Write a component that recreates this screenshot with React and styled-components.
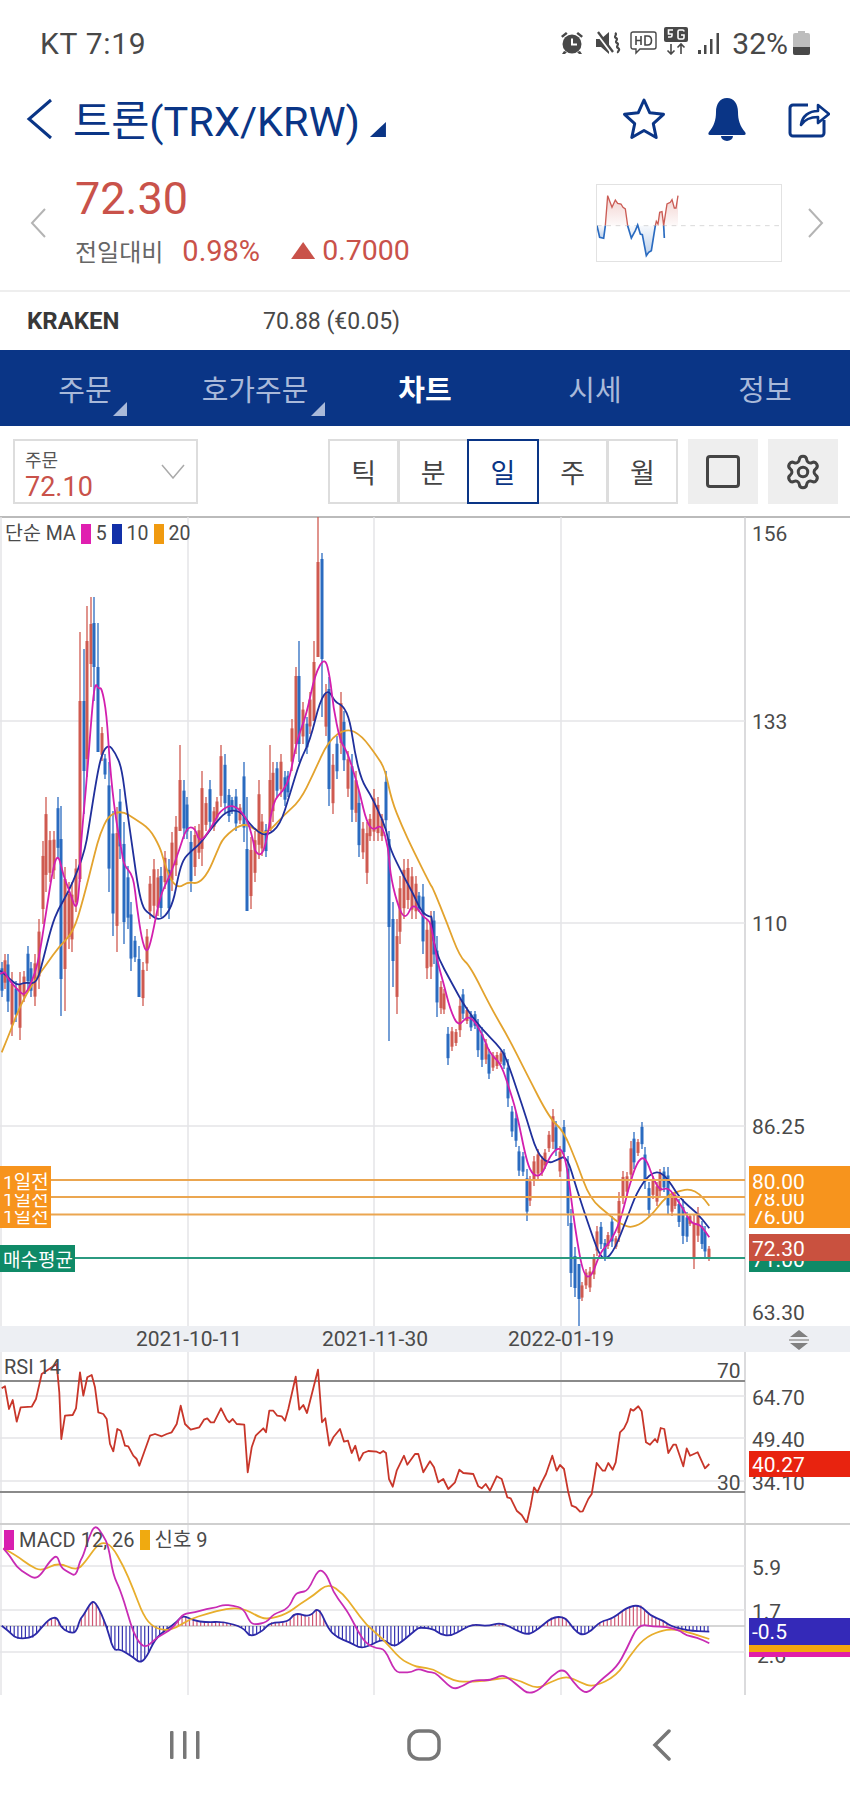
import React from 'react';
import styled, { createGlobalStyle } from 'styled-components';
import { Settings } from 'lucide-react';

const NAVY = '#0a3586';
const RED = '#c9524a';
const FONT = 'Roboto, "Noto Sans CJK KR", sans-serif';

const GlobalStyle = createGlobalStyle`
    html, body {
        margin: 0;
        padding: 0;
        background: #fff;
    }
    body {
        font-family: ${FONT};
        color: #444;
    }
`;

// candles: x, high, low, red?, optional body top/bottom
const candles = [
    [2,963,998,0],[5,955,990,1],[8,955,1013,0],[12,973,1037,1],[16,982,1023,0],[20,973,1041,1],[24,972,1003,1],[28,947,990,0],
    [31,963,998,0],[35,955,1007,1],[39,920,990,1],[43,842,925,1],[46,798,893,1],[50,832,883,1],[54,832,880,1],[58,798,860,0],
    [61,807,1017,0,840,980],[65,868,1012,1,880,970],[69,883,950,1],[72,883,953,1],[76,860,913,1],[80,633,883,1,702,880],[84,650,815,0,702,772],[87,607,778,1,642,760],
    [91,598,688,1,625,665],[94,598,702,0,624,668],[98,624,753,0,668,753],[102,728,762,1],[105,755,780,0],[109,763,893,0],[113,812,937,0],[117,808,953,1],
    [120,790,860,0],[124,823,945,0],[128,867,930,0],[131,903,972,0],[135,937,963,0],[139,947,998,0,960,998],[143,963,1007,1],[147,930,972,1],
    [150,877,920,1],[154,860,917,1],[158,870,917,1],[161,868,918,0],[165,852,890,1],[169,860,920,0],[172,833,892,1],[176,817,877,1],
    [180,746,832,1,781,832],[184,781,840,0],[187,798,840,0],[191,832,893,0],[195,827,877,1],[199,825,860,1],[202,772,867,1],[206,798,832,1],
    [210,781,832,0],[214,808,832,1],[217,798,823,1],[221,746,808,1],[225,755,815,0],[229,790,823,0],[232,798,815,0],[236,790,832,0],
    [240,805,825,1],[244,763,843,0],[247,798,912,0,850,912],[251,838,910,1],[255,832,883,1],[259,781,860,1],[262,815,857,1],[266,825,858,0],
    [270,746,832,1,781,832],[273,763,823,1],[277,763,798,0],[281,755,798,1],[285,772,807,0],[288,772,798,0],[292,720,772,1],[296,668,755,1,677,745],
    [299,642,763,0,677,745],[303,703,745,1],[307,718,755,0],[310,693,735,1],[314,642,722,1,663,722],[318,518,658,1,563,658],[322,554,718,0,560,660],[326,685,737,1],
    [329,678,807,0,690,790],[333,755,815,1],[337,737,780,0],[341,693,755,1],[344,712,772,0],[348,752,798,1],[352,755,823,0],[356,772,823,1],
    [359,792,858,0],[363,823,860,1],[367,823,885,1],[370,815,842,1],[374,790,842,1],[378,798,842,1],[382,815,842,1],[386,772,832,0],
    [389,832,1042,0,840,928],[393,903,988,0,920,962],[397,920,1015,1],[400,877,945,1],[404,860,920,1],[408,860,910,1],[412,868,920,1],[416,877,920,1],
    [419,893,913,0],[423,885,955,0],[427,920,980,1],[431,912,980,1],[434,912,965,0],[437,937,1018,0],[441,982,1015,1],[444,990,1015,1],
    [448,1028,1066,0],[452,1028,1052,1],[456,1030,1047,1],[460,1000,1038,1],[463,990,1020,0],[467,1008,1025,1],[471,1012,1032,0],[475,1012,1030,0],
    [478,1020,1058,0],[482,1028,1068,0],[486,1040,1065,1],[489,1050,1080,0],[493,1053,1072,1],[497,1053,1070,1],[501,1052,1065,1],[504,1050,1070,0],
    [508,1060,1108,0],[512,1107,1138,0],[516,1113,1148,0],[519,1147,1177,0],[523,1153,1177,0],[527,1170,1222,0],[530,1177,1207,1],[534,1157,1187,1],
    [538,1150,1180,1],[542,1157,1177,1],[545,1150,1170,1],[549,1132,1153,1],[553,1110,1150,1],[556,1122,1157,0],[560,1147,1178,1],[564,1121,1160,0],
    [568,1157,1227,0],[571,1210,1288,0],[575,1248,1298,0],[579,1265,1327,0,1265,1300],[582,1283,1302,1],[586,1270,1290,1],[590,1268,1293,1],[594,1255,1280,1],
    [597,1227,1257,1],[601,1223,1250,0],[605,1240,1262,0],[608,1233,1250,1],[612,1217,1248,0],[616,1237,1250,1],[619,1193,1243,1],[623,1172,1205,1],
    [627,1173,1197,1],[631,1142,1183,1],[634,1133,1170,0],[638,1140,1157,1],[642,1123,1150,0],[645,1148,1190,0],[649,1183,1217,0],[653,1177,1200,1],
    [657,1183,1207,1],[660,1170,1197,1],[664,1168,1193,0],[668,1168,1215,0],[672,1193,1217,1],[675,1193,1210,1],[679,1200,1228,0],[683,1200,1245,0],
    [687,1213,1243,0],[690,1215,1227,1],[694,1215,1270,1],[698,1208,1243,1],[702,1222,1250,0],[705,1227,1258,0],[709,1247,1262,1],
];

const z = (ox, oy, list) => {
    const out = [];
    for (let i = 0; i < list.length; i += 2) out.push([ox + list[i] / 3, oy + list[i + 1] / 3]);
    return out;
};
const toPath = (pts) => 'M' + pts.map((p) => `${p[0].toFixed(1)} ${p[1].toFixed(1)}`).join('L');

// rounds the traced corners off, the averages are smooth lines in the chart
const smooth = (pts) => {
    let d = `M${pts[0][0].toFixed(1)} ${pts[0][1].toFixed(1)}`;
    for (let i = 1; i < pts.length - 1; i++) {
        const mx = (pts[i][0] + pts[i + 1][0]) / 2;
        const my = (pts[i][1] + pts[i + 1][1]) / 2;
        d += `Q${pts[i][0].toFixed(1)} ${pts[i][1].toFixed(1)} ${mx.toFixed(1)} ${my.toFixed(1)}`;
    }
    const last = pts[pts.length - 1];
    return d + `L${last[0].toFixed(1)} ${last[1].toFixed(1)}`;
};

const ma5 = [
    ...z(0, 850, [0,375,15,365,20,385,60,430,75,438,95,400,115,340,135,210,160,50,175,15,190,80,210,130,230,190,240,90]),
    ...z(0, 515, [240,1020,260,800,275,600,285,505,295,525,305,520,320,600,330,760,345,900,365,1010]),
    ...z(0, 850, [372,50,400,80,410,170,425,270,440,315,455,270,480,140,510,80,535,10]),
    ...z(0, 515, [540,1000,560,940,585,940,600,990,640,930,660,890,700,870,740,910,760,980]),
    ...z(0, 850, [765,10,785,20]),
    ...z(0, 515, [800,980,820,860,850,830,870,790,890,680,920,600,945,480,975,428,990,490,1000,580,1020,680,1040,710,1060,770,1080,840,1100,925,1120,950,1145,930,1165,1000]),
    ...z(0, 850, [1170,70,1190,160,1215,215,1240,160,1270,205,1290,215,1300,265]),
    ...z(420, 950, [50,30,70,100,90,180,115,235,145,195,180,240,210,315,240,340,262,400,290,490,320,640,340,680,365,680,390,620,420,590,440,640,465,840,490,980,515,985,540,910,570,880,600,820,625,720,650,640,675,620,700,690,720,725,745,715,770,750,790,780,815,825,840,825,868,865]),
];

const ma10 = [
    ...z(0, 850, [0,365,20,380,50,410,75,400,110,405,130,330,155,230,175,180,205,130,235,60,255,0]),
    ...z(0, 515, [265,950,290,790,305,720,325,690,345,715,365,760,380,880,400,1020]),
    ...z(0, 850, [415,120,430,180,450,195,470,212,495,205,520,160,535,80,550,30,575,5]),
    ...z(0, 515, [600,990,640,935,680,890,720,890,745,925,775,955,800,965,840,935,870,840,900,740,930,680,960,560,985,525,1005,565,1030,575,1050,620,1065,720,1085,800,1110,840,1135,890,1160,950]),
    ...z(0, 850, [1170,0,1210,80,1240,135,1265,190,1290,205,1296,200]),
    ...z(420, 950, [40,0,105,120,130,165,180,235,245,300,265,345,290,420,320,510,350,610,385,645,415,630,440,620,470,720,510,840,535,910,555,935,585,900,620,810,650,730,690,672,730,668,780,750,830,790,868,838]),
];

const ma20 = [
    ...z(0, 850, [5,610,30,550,60,470,100,400,140,345,175,295,220,250,250,150,285,10]),
    ...z(0, 515, [300,960,325,905,365,890,405,915,450,945,480,1000]),
    ...z(0, 850, [490,30,510,90,535,118,565,98,595,105,625,70,650,10]),
    ...z(0, 515, [670,970,730,925,770,950,800,960,850,905,900,860,940,780,985,680,1040,642,1085,665,1130,725,1155,765,1175,860,1205,935,1240,1010]),
    ...z(0, 850, [1290,105]),
    ...z(420, 730, [40,480,80,580,120,685]),
    ...z(420, 950, [150,50,215,180,265,265,320,375,390,510,430,545,470,640,510,750,570,800,600,825,640,838,690,805,740,740,780,725,810,720,840,735,868,770]),
];

const rsi = [
    ...z(0, 1330, [5,178,15,172,27,240,38,213,50,278,62,235,95,233,108,210,125,135,170,105,178,190,184,330,195,260,218,258,228,238,240,130,250,200,262,145,275,138,285,175,295,250,310,255,320,270,330,345,340,367,352,300,362,305,375,350,385,352,400,380,410,390,418,410,450,320,465,315,485,322,500,315,515,310,530,285,542,230,555,285,572,302,598,295,612,272,622,268,632,280,642,280,663,238,680,272,688,280,698,270,710,285,733,287,743,430,755,355,767,320,790,298,798,310,808,245,820,245,832,260,845,262,855,275,865,240,887,143,898,242,910,228,921,252,954,122,966,280,976,268,988,350,1000,325,1020,300,1032,338,1044,335,1055,372,1066,350,1078,395,1090,372,1105,366,1130,368,1140,373,1150,366,1158,372,1167,450,1178,473,1190,425,1212,380,1222,407,1245,375,1255,375]),
    ...z(420, 1330, [10,430,30,397,42,415,55,460,70,450,85,480,105,460,118,422,130,432,160,435,175,472,185,478,197,465,210,485,230,442,245,450,262,505,272,508,290,545,305,558,320,582,332,530,342,475,352,490,365,460,378,435,397,380,410,425,420,408,432,420,445,490,455,530,468,535,480,548,488,547,505,510,515,495,530,402,548,425,555,425,565,402,578,422,587,400,600,310,612,298,622,278,632,240,640,245,655,232,665,247,678,340,690,347,705,330,712,340,722,297,733,300,745,372,760,347,768,347,790,412,800,358,810,380,833,370,855,418,868,405]),
];

const macd = [
    ...z(0, 1330, [10,658,30,680,50,715,80,735,105,750,125,735,150,695,172,677,182,715,205,730,228,742,240,695,250,680,265,630,285,585,310,620,325,650,340,740,360,780,385,860,400,910,420,945,440,955,470,925,510,905,535,875,550,855,585,850,620,840,650,835,670,827,700,830,730,838,750,880,765,887,800,880,820,855,865,840,885,795,900,790,925,785,955,718,980,735,1000,790,1030,830,1050,860,1075,910,1100,945,1130,958,1155,960,1185,1030,1210,1030,1235,1030,1255,1018]),
    ...z(420, 1330, [25,1030,45,1030,65,1050,100,1082,130,1070,160,1052,210,1055,245,1037,270,1050,300,1075,325,1095,360,1082,395,1040,432,1017,460,1060,490,1090,510,1088,540,1055,590,1015,620,960,655,885,700,893,740,893,780,905,800,920,830,925,868,943]),
];

const signal = [
    ...z(0, 1330, [10,658,50,680,90,710,125,727,175,700,230,725,255,700,290,650,310,640,335,650,370,710,400,780,430,860,460,895,500,905,530,895,570,870,620,855,680,838,730,838,770,860,800,872,860,855,900,825,940,800,985,762,1030,795,1060,835,1100,890,1150,930,1200,990,1240,1010]),
    ...z(420, 1330, [0,1015,40,1020,80,1045,120,1060,200,1055,260,1045,300,1055,350,1080,390,1060,440,1040,480,1060,520,1075,590,1040,630,980,670,930,720,905,760,900,800,908,868,930]),
];

const histLine = [
    ...z(0, 1330, [5,890,25,905,50,930,100,925,125,895,150,868,172,865,182,895,205,910,228,912,240,870,250,860,275,815,290,825,320,890,340,965,360,960,400,985,420,1002,440,985,465,930,500,900,530,880,548,858,580,875,620,880,670,878,730,895,750,925,790,905,810,880,865,880,885,850,930,865,955,832,985,900,1010,925,1050,940,1080,958,1110,950,1150,928,1180,955,1210,935,1250,900]),
    ...z(420, 1330, [0,895,40,900,60,915,90,922,130,900,160,885,200,892,245,880,290,905,325,918,355,900,395,865,435,863,460,900,485,920,515,905,540,878,580,868,620,835,660,827,690,860,730,875,750,890,800,905,868,908]),
];

const histAt = (x) => {
    for (let i = 1; i < histLine.length; i++) {
        const a = histLine[i - 1];
        const b = histLine[i];
        if (x <= b[0]) return a[1] + ((x - a[0]) / (b[0] - a[0])) * (b[1] - a[1]);
    }
    return 1627;
};

const histBars = [];
for (let x = 3; x < 710; x += 3.73) histBars.push([x, histAt(x)]);

const VGrid = ({ y1, y2 }) => (
    <>
        <GridLine x1="1" x2="1" y1={y1} y2={y2} />
        <GridLine x1="188" x2="188" y1={y1} y2={y2} />
        <GridLine x1="374" x2="374" y1={y1} y2={y2} />
        <GridLine x1="561" x2="561" y1={y1} y2={y2} />
        <AxisBorder x1="745" x2="745" y1={y1} y2={y2} />
    </>
);

const HGrid = ({ y }) => <GridLine x1="0" x2="745" y1={y} y2={y} />;

const PriceTag = ({ y, h = 28, x = 749, w = 101, color, text, textY }) => (
    <>
        <rect x={x} y={y} width={w} height={h} fill={color} />
        <TagText x={x + 3} y={textY} $small={x === 0}>{text}</TagText>
    </>
);

const MainChart = () => (
    <Plot width="850" height="809" viewBox="0 518 850 809">
        <VGrid y1={518} y2={1327} />
        <HGrid y={722} />
        <HGrid y={924} />
        <HGrid y={1127} />
        {candles.map(([x, hi, lo, up, bt, bb], i) => {
            const h = lo - hi;
            const top = bt ?? hi + h * 0.18;
            const bot = bb ?? lo - h * 0.18;
            const col = up ? '#cf5a50' : '#2a6bc0';
            return (
                <g key={i}>
                    <line x1={x} x2={x} y1={hi} y2={lo} stroke={col} strokeWidth="1.3" />
                    <rect x={x - 1.5} y={top} width="3" height={bot - top} fill={col} />
                </g>
            );
        })}
        <Curve d={smooth(ma20)} stroke="#e3a32e" />
        <Curve d={smooth(ma10)} stroke="#20309c" />
        <Curve d={smooth(ma5)} stroke="#d31fae" />
        <LevelLine x1="51" x2="745" y1="1181" y2="1181" stroke="#eba650" />
        <LevelLine x1="51" x2="745" y1="1198" y2="1198" stroke="#eba650" />
        <LevelLine x1="51" x2="745" y1="1215.5" y2="1215.5" stroke="#eba650" />
        <LevelLine x1="75" x2="745" y1="1259" y2="1259" stroke="#2b9a80" />

        <PriceTag x={0} w={51} y={1201} color="#f7941d" text="1일전" textY={1215.5} />
        <PriceTag x={0} w={51} y={1184} color="#f7941d" text="1일전" textY={1198} />
        <PriceTag x={0} w={51} y={1167} color="#f7941d" text="1일전" textY={1181} />
        <PriceTag x={0} w={75} y={1246} h={27} color="#0f8a67" text="매수평균" textY={1259.5} />

        <AxisText x="752" y="533">156</AxisText>
        <AxisText x="752" y="721">133</AxisText>
        <AxisText x="752" y="923">110</AxisText>
        <AxisText x="752" y="1126">86.25</AxisText>
        <AxisText x="752" y="1312">63.30</AxisText>

        <PriceTag y={1201} color="#f7941d" text="76.00" textY={1215.5} />
        <PriceTag y={1184} color="#f7941d" text="78.00" textY={1198} />
        <PriceTag y={1167} color="#f7941d" text="80.00" textY={1181} />
        <PriceTag y={1246} h={27} color="#0f8a67" text="71.00" textY={1259} />
        <PriceTag y={1235} h={27} color="#c9513f" text="72.30" textY={1248} />
    </Plot>
);

const RsiChart = () => (
    <Plot width="850" height="171" viewBox="0 1353 850 171">
        <VGrid y1={1353} y2={1524} />
        <HGrid y={1397} />
        <HGrid y={1439} />
        <HGrid y={1482} />
        <BandLine x1="0" x2="745" y1="1382" y2="1382" />
        <BandLine x1="0" x2="745" y1="1493" y2="1493" />
        <Curve d={toPath(rsi)} stroke="#c8362a" />
        <AxisText x="717" y="1370">70</AxisText>
        <AxisText x="717" y="1482">30</AxisText>
        <AxisText x="752" y="1397">64.70</AxisText>
        <AxisText x="752" y="1439">49.40</AxisText>
        <AxisText x="752" y="1482">34.10</AxisText>
        <PriceTag y={1452} h={26} color="#e8230f" text="40.27" textY={1464} />
    </Plot>
);

const MacdChart = () => (
    <Plot width="850" height="172" viewBox="0 1524 850 172">
        <VGrid y1={1524} y2={1696} />
        <HGrid y={1567} />
        <HGrid y={1611} />
        <HGrid y={1653} />
        <line x1="0" x2="745" y1="1627" y2="1627" stroke="#c9c9c9" strokeWidth="1.5" />
        {histBars.map(([x, y], i) => (
            <line key={i} x1={x} x2={x} y1="1627" y2={y} stroke={y < 1627 ? '#cf5673' : '#3432b0'} strokeWidth="1.2" />
        ))}
        <Curve d={smooth(histLine)} stroke="#2c2aa8" />
        <Curve d={smooth(signal)} stroke="#e8ae2c" />
        <Curve d={smooth(macd)} stroke="#c82cb4" />
        <AxisText x="752" y="1567">5.9</AxisText>
        <AxisText x="752" y="1611">1.7</AxisText>
        <AxisText x="757" y="1655">2.6</AxisText>
        <rect x="749" y="1646" width="101" height="7" fill="#f2a60e" />
        <rect x="749" y="1653" width="101" height="5" fill="#e01fa8" />
        <PriceTag y={1619} h={27} color="#3429b8" text="-0.5" textY={1631} />
    </Plot>
);

const red = ['75,170 82,80 95,115 105,93 112,103 122,105 128,115 135,120 142,170', '225,170 228,157 233,165 238,130 245,128 250,170', '250,170 260,105 270,100 275,92 282,117 287,117 293,80 293,170'];
const blue = ['50,170 58,205 70,208 75,170', '142,170 153,207 165,185 172,168 180,195 186,197 198,260 205,250 213,245 225,170', '250,170 252,207 250,170'];

const MiniChart = () => (
    <MiniBox>
        <svg width="184" height="76" viewBox="50 48 552 228">
            <defs>
                <linearGradient id="miniRed" x1="0" y1="0" x2="0" y2="1">
                    <stop offset="0" stopColor="#cf5a50" stopOpacity="0.28" />
                    <stop offset="1" stopColor="#cf5a50" stopOpacity="0.03" />
                </linearGradient>
                <linearGradient id="miniBlue" x1="0" y1="1" x2="0" y2="0">
                    <stop offset="0" stopColor="#2a6bc0" stopOpacity="0.32" />
                    <stop offset="1" stopColor="#2a6bc0" stopOpacity="0.03" />
                </linearGradient>
            </defs>
            <line x1="50" x2="602" y1="170" y2="170" stroke="#d9d9d9" strokeWidth="3" strokeDasharray="14 14" />
            {red.map((p) => <polygon key={p} points={p} fill="url(#miniRed)" />)}
            {blue.map((p) => <polygon key={p} points={p} fill="url(#miniBlue)" />)}
            <polyline points="75,170 82,80 95,115 105,93 112,103 122,105 128,115 135,120 142,170" fill="none" stroke="#cb5c55" strokeWidth="4" />
            <polyline points="225,170 228,157 233,165 238,130 245,128 250,170 260,105 270,100 275,92 282,117 287,117 293,80" fill="none" stroke="#cb5c55" strokeWidth="4" />
            <polyline points="50,170 58,205 70,208 75,170" fill="none" stroke="#2a6bc0" strokeWidth="5" />
            <polyline points="142,170 153,207 165,185 172,168 180,195 186,197 198,260 205,250 213,245 225,170" fill="none" stroke="#2a6bc0" strokeWidth="5" />
            <polyline points="250,170 252,207" fill="none" stroke="#2a6bc0" strokeWidth="5" />
        </svg>
    </MiniBox>
);

const App = () => {
    return (
        <>
            <GlobalStyle />
            <Page>
                <StatusBar>
                    <StatusText>KT 7:19</StatusText>
                    <StatusIcons>
                        <svg width="24" height="24" viewBox="0 0 24 24" fill="#484848">
                            <path d="M1 5l5-4 1.6 1.8-5 4zM23 5l-5-4-1.6 1.8 5 4z" />
                            <circle cx="12" cy="13" r="9.5" />
                            <path d="M4 20l-2 3h3l2-2zM20 20l2 3h-3l-2-2z" />
                            <path d="M12 7.5V13.5H17" fill="none" stroke="#fff" strokeWidth="2" />
                        </svg>
                        <svg width="26" height="24" viewBox="0 0 26 24" style={{ marginLeft: 11 }}>
                            <path d="M1 8h5l8-7v22l-8-7H1z" fill="#484848" />
                            <path d="M2 2l15 20" stroke="#fff" strokeWidth="3" />
                            <path d="M3 1l15 20" stroke="#484848" strokeWidth="2.4" />
                            <path d="M20 2c3 2-2 3 1 5s-2 3 1 5-2 3 1 5-1 3 0 5" fill="none" stroke="#484848" strokeWidth="2.2" />
                        </svg>
                        <svg width="27" height="24" viewBox="0 0 27 24" style={{ marginLeft: 9 }}>
                            <path d="M3 1h21a2 2 0 0 1 2 2v13a2 2 0 0 1-2 2H10l-4 4v-4H3a2 2 0 0 1-2-2V3a2 2 0 0 1 2-2z" fill="none" stroke="#484848" strokeWidth="1.4" />
                            <path d="M6 5v9M6 9.500h5M11 5v9M15 5v9h2.500c2.500 0 4-1.500 4-4.500s-1.500-4.500-4-4.500z" fill="none" stroke="#484848" strokeWidth="1.6" />
                        </svg>
                        <svg width="24" height="28" viewBox="0 0 24 28" style={{ marginLeft: 7, marginTop: -5 }}>
                            <rect x="0" y="0" width="24" height="15" rx="2" fill="#484848" />
                            <path d="M9 3H4.500v4H8v1.500a1.500 1.500 0 0 1-1.500 1.500H4M20 4.500a1.500 1.500 0 0 0-1.500-1.500h-3a1.500 1.500 0 0 0-1.500 1.500v6a1.500 1.500 0 0 0 1.500 1.500h3a1.500 1.500 0 0 0 1.500-1.500V8h-3" fill="none" stroke="#fff" strokeWidth="1.6" />
                            <path d="M7 17v10M3.500 23.500L7 27l3.500-3.500M17 27V17M13.500 20.500L17 17l3.500 3.500" fill="none" stroke="#484848" strokeWidth="1.6" />
                        </svg>
                        <svg width="23" height="23" viewBox="0 0 23 23" fill="#484848" style={{ marginLeft: 9 }}>
                            <rect x="1" y="18" width="3" height="4" />
                            <rect x="7" y="13" width="2.500" height="9" />
                            <rect x="13" y="7" width="2.500" height="15" />
                            <rect x="19.500" y="1" width="2.500" height="21" />
                        </svg>
                        <BatteryText>32%</BatteryText>
                        <svg width="17" height="24" viewBox="0 0 17 24">
                            <path d="M5 0h7v2h3a2 2 0 0 1 2 2v18a2 2 0 0 1-2 2H2a2 2 0 0 1-2-2V4a2 2 0 0 1 2-2h3z" fill="#bdbdbd" />
                            <path d="M0 16h17v6a2 2 0 0 1-2 2H2a2 2 0 0 1-2-2z" fill="#484848" />
                        </svg>
                    </StatusIcons>
                </StatusBar>

                <Header>
                    <svg width="27" height="42" viewBox="0 0 27 42">
                        <path d="M25 2L3 21l22 19" fill="none" stroke={NAVY} strokeWidth="3" />
                    </svg>
                    <Title>트론(TRX/KRW)</Title>
                    <TitleMark />
                    <HeaderIcons>
                        <svg width="44" height="44" viewBox="0 0 44 44">
                            <path d="M22 3l5.800 12.800 13.700 1.500-10.200 9.400 2.900 13.800L22 33.500 9.800 40.500l2.900-13.800L2.500 17.300l13.700-1.500z" fill="none" stroke={NAVY} strokeWidth="3" strokeLinejoin="round" />
                        </svg>
                        <svg width="40" height="44" viewBox="0 0 40 44">
                            <path d="M20 1c7 0 11 6 11 14 0 8 2 14 7 20 1 1 1 3-1 3H3c-2 0-2-2-1-3 5-6 7-12 7-20C9 7 13 1 20 1z" fill={NAVY} />
                            <path d="M14 39h12a6 5 0 0 1-12 0z" fill={NAVY} />
                        </svg>
                        <svg width="42" height="40" viewBox="0 0 42 40">
                            <path d="M20 6H5a3 3 0 0 0-3 3v25a3 3 0 0 0 3 3h28a3 3 0 0 0 3-3V21" fill="none" stroke={NAVY} strokeWidth="3" />
                            <path d="M13 26c1-9 8-14 17-14V6l11 9-11 9v-6c-8 0-13 2-17 8z" fill="none" stroke={NAVY} strokeWidth="2.600" strokeLinejoin="round" />
                        </svg>
                    </HeaderIcons>
                </Header>

                <Quote>
                    <svg width="16" height="30" viewBox="0 0 16 30">
                        <path d="M15 1L2 15l13 14" fill="none" stroke="#b4b4b4" strokeWidth="2" />
                    </svg>
                    <QuoteBody>
                        <Price>72.30</Price>
                        <ChangeRow>
                            <ChangeLabel>전일대비</ChangeLabel>
                            <ChangeRate>0.98%</ChangeRate>
                            <UpMark />
                            <ChangeValue>0.7000</ChangeValue>
                        </ChangeRow>
                    </QuoteBody>
                    <MiniChart />
                    <svg width="16" height="30" viewBox="0 0 16 30">
                        <path d="M1 1l13 14L1 29" fill="none" stroke="#b4b4b4" strokeWidth="2" />
                    </svg>
                </Quote>

                <Exchange>
                    <ExchangeName>KRAKEN</ExchangeName>
                    <ExchangePrice>70.88 (€0.05)</ExchangePrice>
                </Exchange>

                <Tabs>
                    <Tab $markRight={43}>주문</Tab>
                    <Tab $markRight={15}>호가주문</Tab>
                    <Tab $active>차트</Tab>
                    <Tab>시세</Tab>
                    <Tab>정보</Tab>
                </Tabs>

                <Toolbar>
                    <PriceSelect>
                        <SelectText>
                            <SelectLabel>주문</SelectLabel>
                            <SelectValue>72.10</SelectValue>
                        </SelectText>
                        <svg width="24" height="15" viewBox="0 0 24 15">
                            <path d="M1 1l11 13L23 1" fill="none" stroke="#aaa" strokeWidth="1.500" />
                        </svg>
                    </PriceSelect>
                    <Periods>
                        <Period>틱</Period>
                        <Period>분</Period>
                        <Period $selected>일</Period>
                        <Period>주</Period>
                        <Period>월</Period>
                    </Periods>
                    <ToolButton><SquareIcon /></ToolButton>
                    <ToolButton><Settings size={38} color="#444" strokeWidth={1.9} /></ToolButton>
                </Toolbar>

                <PricePane>
                    <MainChart />
                    <Legend $top={5} $left={5}>
                        <LegendText>단순 MA</LegendText>
                        <Swatch $color="#e01fb0" />
                        <LegendText>5</LegendText>
                        <Swatch $color="#1230a8" />
                        <LegendText>10</LegendText>
                        <Swatch $color="#f09a10" />
                        <LegendText>20</LegendText>
                    </Legend>
                </PricePane>

                <DateBar>
                    <DateText>2021-10-11</DateText>
                    <DateText>2021-11-30</DateText>
                    <DateText>2022-01-19</DateText>
                    <SortIcon width="22" height="20" viewBox="0 0 22 20">
                        <path d="M11 0l9 7H2zM11 20l-9-7h18z" fill="#808080" />
                        <rect x="1" y="9" width="20" height="2" fill="#b0b0b0" />
                    </SortIcon>
                </DateBar>

                <IndicatorPane>
                    <RsiChart />
                    <Legend $top={4} $left={4}>
                        <LegendText $wide>RSI 14</LegendText>
                    </Legend>
                </IndicatorPane>

                <IndicatorPane $divider>
                    <MacdChart />
                    <Legend $top={6} $left={4}>
                        <Swatch $color="#d81fb0" />
                        <LegendText $wide>MACD 12, 26</LegendText>
                        <Swatch $color="#f0aa10" />
                        <LegendText $wide>신호 9</LegendText>
                    </Legend>
                </IndicatorPane>

                <NavBar>
                    <svg width="32" height="30" viewBox="0 0 32 30" fill="#777">
                        <rect x="1" y="1" width="3.500" height="28" rx="1" />
                        <rect x="14" y="1" width="3.500" height="28" rx="1" />
                        <rect x="27" y="1" width="3.500" height="28" rx="1" />
                    </svg>
                    <svg width="34" height="32" viewBox="0 0 34 32">
                        <rect x="2" y="2" width="30" height="28" rx="10" fill="none" stroke="#777" strokeWidth="3.500" />
                    </svg>
                    <svg width="20" height="32" viewBox="0 0 20 32">
                        <path d="M17 2L3 16l14 14" fill="none" stroke="#777" strokeWidth="3.500" strokeLinecap="round" />
                    </svg>
                </NavBar>
            </Page>
        </>
    );
};

const Page = styled.div`
    width: 850px;
    height: 1795px;
    overflow: hidden;
    background: #fff;
    display: flex;
    flex-direction: column;
`;

const StatusBar = styled.div`
    height: 86px;
    flex-shrink: 0;
    display: flex;
    align-items: center;
    justify-content: space-between;
    padding: 0 40px;
`;
const StatusText = styled.span`
    font-size: 30px;
    letter-spacing: 0.7px;
    color: #484848;
`;
const StatusIcons = styled.div`
    display: flex;
    align-items: center;
`;
const BatteryText = styled.span`
    font-size: 30px;
    color: #484848;
    margin: 0 5px 0 12px;
`;

const Header = styled.div`
    height: 70px;
    flex-shrink: 0;
    box-sizing: border-box;
    display: flex;
    align-items: center;
    padding: 0 20px 4px 26px;
`;
const Title = styled.h1`
    margin: -2px 0 0 20px;
    font-size: 41.5px;
    font-weight: 400;
    color: ${NAVY};
    white-space: nowrap;
`;
const TitleMark = styled.span`
    width: 16px;
    height: 15px;
    margin: 21px 0 0 10px;
    background: ${NAVY};
    clip-path: polygon(100% 0, 100% 100%, 0 100%);
`;
const HeaderIcons = styled.div`
    margin-left: auto;
    display: flex;
    align-items: center;
    gap: 41px;
`;

const Quote = styled.div`
    height: 134px;
    flex-shrink: 0;
    display: flex;
    align-items: center;
    padding: 0 26px 0 30px;
    border-bottom: 2px solid #eee;
`;
const QuoteBody = styled.div`
    margin: -2px 0 0 29px;
    display: flex;
    flex-direction: column;
    gap: 11px;
`;
const Price = styled.div`
    font-size: 45px;
    line-height: 46px;
    color: ${RED};
`;
const ChangeRow = styled.div`
    display: flex;
    align-items: center;
    height: 36px;
`;
const ChangeLabel = styled.span`
    font-size: 24px;
    color: #666;
`;
const ChangeRate = styled.span`
    margin-left: 19px;
    font-size: 29px;
    color: ${RED};
`;
const UpMark = styled.span`
    width: 24px;
    height: 17px;
    margin-left: 31px;
    background: ${RED};
    clip-path: polygon(50% 0, 100% 100%, 0 100%);
`;
const ChangeValue = styled.span`
    margin-left: 7px;
    font-size: 28.5px;
    color: ${RED};
`;
const MiniBox = styled.div`
    margin: 0 26px 0 auto;
    width: 186px;
    height: 78px;
    box-sizing: border-box;
    border: 1px solid #e2e2e2;
    svg {
        display: block;
    }
`;

const Exchange = styled.div`
    height: 58px;
    flex-shrink: 0;
    display: flex;
    align-items: center;
    padding-left: 27px;
`;
const ExchangeName = styled.span`
    width: 236px;
    font-size: 24px;
    font-weight: 700;
    color: #383838;
`;
const ExchangePrice = styled.span`
    font-size: 23px;
    color: #484848;
`;

const Tabs = styled.div`
    height: 76px;
    flex-shrink: 0;
    display: grid;
    grid-template-columns: repeat(5, 170px);
    background: ${NAVY};
`;
const Tab = styled.div`
    position: relative;
    display: flex;
    align-items: center;
    justify-content: center;
    font-size: 29px;
    font-weight: ${(p) => (p.$active ? 700 : 400)};
    color: ${(p) => (p.$active ? '#fff' : '#a9b9d9')};
    ${(p) => p.$markRight && `
        &::after {
            content: '';
            position: absolute;
            right: ${p.$markRight}px;
            bottom: 10px;
            width: 14px;
            height: 14px;
            background: #a9b9d9;
            clip-path: polygon(100% 0, 100% 100%, 0 100%);
        }
    `}
`;

const Toolbar = styled.div`
    height: 91px;
    flex-shrink: 0;
    display: flex;
    align-items: flex-start;
    padding: 13px 10px 0 13px;
    box-sizing: border-box;
`;
const PriceSelect = styled.div`
    width: 185px;
    height: 65px;
    flex-shrink: 0;
    box-sizing: border-box;
    border: 2px solid #ddd;
    display: flex;
    align-items: center;
    justify-content: space-between;
    padding: 8px 11px 0 10px;
    svg {
        margin-top: -8px;
    }
`;
const SelectText = styled.div`
    display: flex;
    flex-direction: column;
`;
const SelectLabel = styled.span`
    font-size: 18px;
    line-height: 22px;
    color: #555;
`;
const SelectValue = styled.span`
    font-size: 27px;
    line-height: 30px;
    color: ${RED};
`;
const Periods = styled.div`
    display: flex;
    flex-shrink: 0;
    margin-left: 130px;
`;
const Period = styled.div`
    position: relative;
    z-index: ${(p) => (p.$selected ? 1 : 0)};
    width: 71.2px;
    height: 65px;
    box-sizing: border-box;
    margin-left: -1.5px;
    border: 2px solid ${(p) => (p.$selected ? NAVY : '#ddd')};
    display: flex;
    align-items: center;
    justify-content: center;
    font-size: 27px;
    color: ${(p) => (p.$selected ? NAVY : '#444')};
    &:first-child {
        margin-left: 0;
    }
`;
const ToolButton = styled.div`
    width: 70px;
    height: 65px;
    margin-left: 10px;
    flex-shrink: 0;
    background: #eee;
    display: flex;
    align-items: center;
    justify-content: center;
`;
const SquareIcon = styled.span`
    width: 28px;
    height: 27px;
    border: 3px solid #444;
    border-radius: 4px;
`;

const PricePane = styled.div`
    position: relative;
    height: 810px;
    flex-shrink: 0;
    border-top: 2px solid #bbb;
    margin-top: -1px;
    box-sizing: border-box;
    svg {
        margin-top: -1px;
    }
`;
const IndicatorPane = styled.div`
    position: relative;
    flex-shrink: 0;
    svg {
        display: block;
    }
    ${(p) => p.$divider && `
        &::before {
            content: '';
            position: absolute;
            left: 0;
            right: 0;
            top: 0;
            height: 1.5px;
            background: #cfcfcf;
        }
    `}
`;
const Plot = styled.svg`
    display: block;
    font-family: ${FONT};
`;
const GridLine = styled.line`
    stroke: #e4e4e7;
    stroke-width: 1.5;
`;
const AxisBorder = styled.line`
    stroke: #cfcfd2;
    stroke-width: 1.5;
`;
const Curve = styled.path`
    fill: none;
    stroke-width: 1.8;
    stroke-linejoin: round;
`;
const LevelLine = styled.line`
    stroke-width: 2;
`;
const BandLine = styled.line`
    stroke: #8a8a8a;
    stroke-width: 2;
`;
const AxisText = styled.text.attrs({ dy: 2 })`
    font-size: 21px;
    fill: #4a4a4a;
    dominant-baseline: central;
`;
const TagText = styled.text.attrs({ dy: 2 })`
    font-size: ${(p) => (p.$small ? 19 : 21)}px;
    fill: #fff;
    dominant-baseline: central;
`;

const Legend = styled.div`
    position: absolute;
    top: ${(p) => p.$top}px;
    left: ${(p) => p.$left}px;
    display: flex;
    align-items: center;
    gap: 5px;
`;
const LegendText = styled.span`
    font-size: ${(p) => (p.$wide ? 20 : 19.5)}px;
    line-height: 22px;
    color: #4a4a4a;
    white-space: nowrap;
`;
const Swatch = styled.span`
    width: 10px;
    height: 20px;
    background: ${(p) => p.$color};
`;

const DateBar = styled.div`
    height: 26px;
    flex-shrink: 0;
    display: flex;
    align-items: center;
    padding: 1px 0 0 136px;
    box-sizing: border-box;
    background: #edeff3;
`;
const DateText = styled.span`
    width: 186px;
    font-size: 21px;
    line-height: 25px;
    color: #4a4a4a;
`;
const SortIcon = styled.svg`
    margin-left: 94px;
`;

const NavBar = styled.div`
    flex: 1;
    display: grid;
    grid-template-columns: 238px 245px 1fr;
    align-items: center;
    padding-left: 169px;
`;

export default App;
